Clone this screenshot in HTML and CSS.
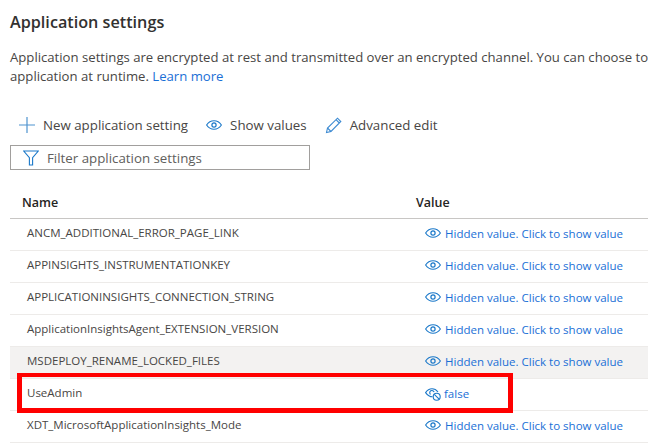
FILE: index.html
```html
<!DOCTYPE html>
<html lang="en">
<head>
    <meta charset="UTF-8">
    <title>Application settings</title>
    <link rel="stylesheet" href="styles.css">
</head>
<body>
    <h2 class="title">Application settings</h2>
    <p class="desc">Application settings are encrypted at rest and transmitted over an encrypted channel. You can choose to<br>application at runtime. <a href="#">Learn more</a></p>

    <div class="toolbar">
        <span class="tool">
            <svg width="16" height="16" viewBox="0 0 16 16"><path d="M8 0v16M0 8h16" stroke="#4f93cf" stroke-width="1.2" fill="none"/></svg>
            New application setting
        </span>
        <span class="tool">
            <svg width="16" height="10" viewBox="0 0 16 10"><path d="M.6 5C2.4 2.3 5 .8 8 .8s5.6 1.5 7.4 4.2C13.6 7.7 11 9.2 8 9.2S2.4 7.7.6 5z" stroke="#1a78c9" stroke-width="1.1" fill="none"/><circle cx="8" cy="5" r="2.1" stroke="#1a78c9" stroke-width="1.2" fill="none"/></svg>
            Show values
        </span>
        <span class="tool">
            <svg width="17" height="17" viewBox="0 0 17 17"><path d="M1.5 15.5l1-4.500L12.500 1.200l3.300 3.300L6 14.500zM2.500 11l3.500 3.500M11 2.700l3.300 3.300" stroke="#3c8ad2" stroke-width="1.1" fill="none"/></svg>
            Advanced edit
        </span>
    </div>

    <div class="filter">
        <svg width="16" height="16" viewBox="0 0 16 16"><path d="M.7 1h14.600L9.600 7.700v7.300H6.400V7.700z" stroke="#1a78c9" stroke-width="1.1" fill="none"/></svg>
        <span>Filter application settings</span>
    </div>

    <div class="table">
        <div class="row head">
            <div class="col-name">Name</div>
            <div class="col-value">Value</div>
        </div>
        <div class="row">
            <div class="col-name">ANCM_ADDITIONAL_ERROR_PAGE_LINK</div>
            <div class="col-value"><svg class="eye" width="16" height="10" viewBox="0 0 16 10"><path d="M.6 5C2.4 2.3 5 .8 8 .8s5.6 1.5 7.4 4.2C13.6 7.7 11 9.2 8 9.2S2.4 7.7.6 5z" stroke="#1a78c9" stroke-width="1.1" fill="none"/><circle cx="8" cy="5" r="2.1" stroke="#1a78c9" stroke-width="1.2" fill="none"/></svg><a href="#">Hidden value. Click to show value</a></div>
        </div>
        <div class="row">
            <div class="col-name">APPINSIGHTS_INSTRUMENTATIONKEY</div>
            <div class="col-value"><svg class="eye" width="16" height="10" viewBox="0 0 16 10"><path d="M.6 5C2.4 2.3 5 .8 8 .8s5.6 1.5 7.4 4.2C13.6 7.7 11 9.2 8 9.2S2.4 7.7.6 5z" stroke="#1a78c9" stroke-width="1.1" fill="none"/><circle cx="8" cy="5" r="2.1" stroke="#1a78c9" stroke-width="1.2" fill="none"/></svg><a href="#">Hidden value. Click to show value</a></div>
        </div>
        <div class="row">
            <div class="col-name">APPLICATIONINSIGHTS_CONNECTION_STRING</div>
            <div class="col-value"><svg class="eye" width="16" height="10" viewBox="0 0 16 10"><path d="M.6 5C2.4 2.3 5 .8 8 .8s5.6 1.5 7.4 4.2C13.6 7.7 11 9.2 8 9.2S2.4 7.7.6 5z" stroke="#1a78c9" stroke-width="1.1" fill="none"/><circle cx="8" cy="5" r="2.1" stroke="#1a78c9" stroke-width="1.2" fill="none"/></svg><a href="#">Hidden value. Click to show value</a></div>
        </div>
        <div class="row">
            <div class="col-name">ApplicationInsightsAgent_EXTENSION_VERSION</div>
            <div class="col-value"><svg class="eye" width="16" height="10" viewBox="0 0 16 10"><path d="M.6 5C2.4 2.3 5 .8 8 .8s5.6 1.5 7.4 4.2C13.6 7.7 11 9.2 8 9.2S2.4 7.7.6 5z" stroke="#1a78c9" stroke-width="1.1" fill="none"/><circle cx="8" cy="5" r="2.1" stroke="#1a78c9" stroke-width="1.2" fill="none"/></svg><a href="#">Hidden value. Click to show value</a></div>
        </div>
        <div class="row hover">
            <div class="col-name">MSDEPLOY_RENAME_LOCKED_FILES</div>
            <div class="col-value"><svg class="eye" width="16" height="10" viewBox="0 0 16 10"><path d="M.6 5C2.4 2.3 5 .8 8 .8s5.6 1.5 7.4 4.2C13.6 7.7 11 9.2 8 9.2S2.4 7.7.6 5z" stroke="#1a78c9" stroke-width="1.1" fill="none"/><circle cx="8" cy="5" r="2.1" stroke="#1a78c9" stroke-width="1.2" fill="none"/></svg><a href="#">Hidden value. Click to show value</a></div>
        </div>
        <div class="row">
            <div class="col-name">UseAdmin</div>
            <div class="col-value"><svg class="eye-off" width="16" height="13" viewBox="0 0 16 13"><path d="M7.500 8.800C4.800 8.800 2.500 7.200.6 4.600 2.400 2 4.500.8 7 .8c2.500 0 4.500 1.200 6 3.200M9.100 4.200A2.200 2.200 0 1 0 5.600 6.400" stroke="#1a78c9" stroke-width="1.1" fill="none"/><circle cx="11.700" cy="8.700" r="3.500" stroke="#1a78c9" stroke-width="1.1" fill="none"/><path d="M9.300 6.300l4.800 4.800" stroke="#1a78c9" stroke-width="1.1"/></svg><a href="#">false</a></div>
        </div>
        <div class="row">
            <div class="col-name">XDT_MicrosoftApplicationInsights_Mode</div>
            <div class="col-value"><svg class="eye" width="16" height="10" viewBox="0 0 16 10"><path d="M.6 5C2.4 2.3 5 .8 8 .8s5.6 1.5 7.4 4.2C13.6 7.7 11 9.2 8 9.2S2.4 7.7.6 5z" stroke="#1a78c9" stroke-width="1.1" fill="none"/><circle cx="8" cy="5" r="2.1" stroke="#1a78c9" stroke-width="1.2" fill="none"/></svg><a href="#">Hidden value. Click to show value</a></div>
        </div>
    </div>

    <div class="callout"></div>
</body>
</html>
```

FILE: styles.css
```css
html, body {
    height: 447px;
    overflow: hidden;
}
body {
    font-family: "Open Sans", "Noto Sans", Arial, sans-serif;
    margin: 0;
    padding: 0 0 0 10px;
    background-color: #fff;
    color: #323130;
    font-size: 13px;
    position: relative;
}
a {
    color: #1a6fd6;
    text-decoration: none;
}
.title {
    margin: 0;
    padding-top: 12px;
    font-size: 16.2px;
    line-height: 20px;
    font-weight: 600;
}
.desc {
    margin: 16px 0 0;
    width: 660px;
    line-height: 19px;
    font-size: 13.15px;
    color: #484644;
}
.toolbar {
    display: flex;
    align-items: center;
    height: 20px;
    margin-top: 29px;
    padding-left: 9px;
    gap: 18px;
    color: #484644;
}
.tool {
    display: flex;
    align-items: center;
    gap: 8px;
    font-size: 13.3px;
    white-space: nowrap;
}
.filter {
    display: flex;
    align-items: center;
    gap: 8px;
    box-sizing: border-box;
    width: 300px;
    height: 25px;
    margin-top: 10px;
    padding-left: 12px;
    border: 1px solid #a19f9d;
    color: #605e5c;
    font-size: 13.3px;
}
.table {
    margin-top: 16px;
}
.row {
    display: flex;
    align-items: center;
    height: 32px;
    box-sizing: border-box;
    border-bottom: 1px solid #edebe9;
    font-size: 11.5px;
    color: #484644;
}
.row.head {
    height: 33px;
    border-bottom-color: #c8c6c4;
    font-size: 12.5px;
    font-weight: 600;
    color: #252423;
}
.row.hover {
    background: #f3f2f1;
}
.col-name {
    width: 406px;
    padding-left: 17px;
    padding-bottom: 5px;
    box-sizing: border-box;
    white-space: nowrap;
}
.row.head .col-name {
    padding-left: 12px;
    padding-bottom: 0;
}
.col-value {
    display: flex;
    align-items: center;
    padding-left: 9px;
    padding-bottom: 3px;
    white-space: nowrap;
}
.row.head .col-value {
    padding-left: 0;
    padding-bottom: 0;
}
.eye {
    margin-right: 4px;
    margin-bottom: 1px;
}
.eye-off {
    margin-right: 3px;
    margin-top: 2px;
}
.callout {
    position: absolute;
    left: 17px;
    top: 373px;
    width: 496px;
    height: 40px;
    box-sizing: border-box;
    border: 5px solid #f00;
    border-top-width: 4px;
}
```
